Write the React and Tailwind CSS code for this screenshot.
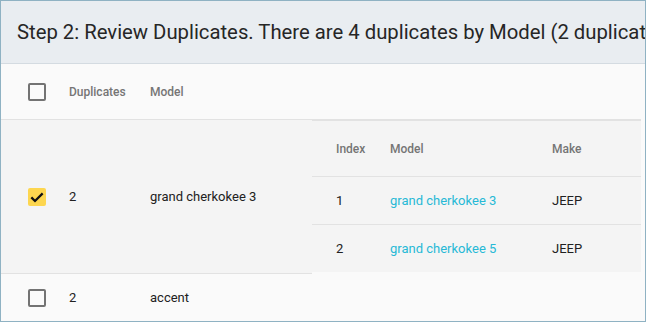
import React from "react";

const font = { fontFamily: "Roboto, 'Liberation Sans', sans-serif" };

function Box({ checked }) {
  if (checked) {
    return (
      <div className="w-[18px] h-[18px] rounded-[2px] bg-[#fdd64f] flex items-center justify-center">
        <svg width="16" height="16" viewBox="0 0 24 24">
          <path d="M3.5 12.5l5.5 5.5L20.5 6.5" fill="none" stroke="#111" strokeWidth="3.4" strokeLinecap="butt" />
        </svg>
      </div>
    );
  }
  return <div className="w-[18px] h-[18px] rounded-[2px] border-2 border-[#737373]" />;
}

export default function App() {
  return (
    <div style={font} className="w-[646px] h-[322px] border border-[#8fb2c3] bg-[#fafafa] overflow-hidden text-[#212121]">
      <div className="h-[63px] bg-[#e9edf1] border-b border-[#d4dbe1] flex items-center pl-[16px] whitespace-nowrap overflow-hidden">
        <span className="text-[20.3px] text-[#262626]">Step 2: Review Duplicates. There are 4 duplicates by Model (2 duplicates per model)</span>
      </div>
      <div className="w-[640px]">
        <div className="h-[56px] border-b border-[#e2e2e2] flex items-center text-[12px] font-medium text-[#757575]">
          <div className="pl-[27px] w-[68px]"><Box /></div>
          <div className="w-[81px]">Duplicates</div>
          <div>Model</div>
        </div>
        <div className="flex items-start bg-[#fafafa]">
          <div className="w-[311px] h-[154px] bg-[#f4f4f4] border-b border-[#e2e2e2] flex items-center text-[13px]">
            <div className="pl-[27px] w-[68px]"><Box checked /></div>
            <div className="w-[81px]">2</div>
            <div>grand cherkokee 3</div>
          </div>
          <div className="flex-1 bg-[#f4f4f4] border-t border-[#e2e2e2] text-[13px]">
            <div className="h-[56px] border-b border-[#e2e2e2] flex items-center text-[12px] font-medium text-[#757575]">
              <div className="pl-[24px] w-[78px]">Index</div>
              <div className="w-[162px]">Model</div>
              <div>Make</div>
            </div>
            <div className="h-[48px] border-b border-[#e2e2e2] flex items-center">
              <div className="pl-[24px] w-[78px]">1</div>
              <div className="w-[162px] text-[#27b9d6]">grand cherkokee 3</div>
              <div>JEEP</div>
            </div>
            <div className="h-[47px] flex items-center">
              <div className="pl-[24px] w-[78px]">2</div>
              <div className="w-[162px] text-[#27b9d6]">grand cherkokee 5</div>
              <div>JEEP</div>
            </div>
          </div>
        </div>
        <div className="h-[48px] flex items-center text-[13px]">
          <div className="pl-[27px] w-[68px]"><Box /></div>
          <div className="w-[81px]">2</div>
          <div>accent</div>
        </div>
      </div>
    </div>
  );
}
